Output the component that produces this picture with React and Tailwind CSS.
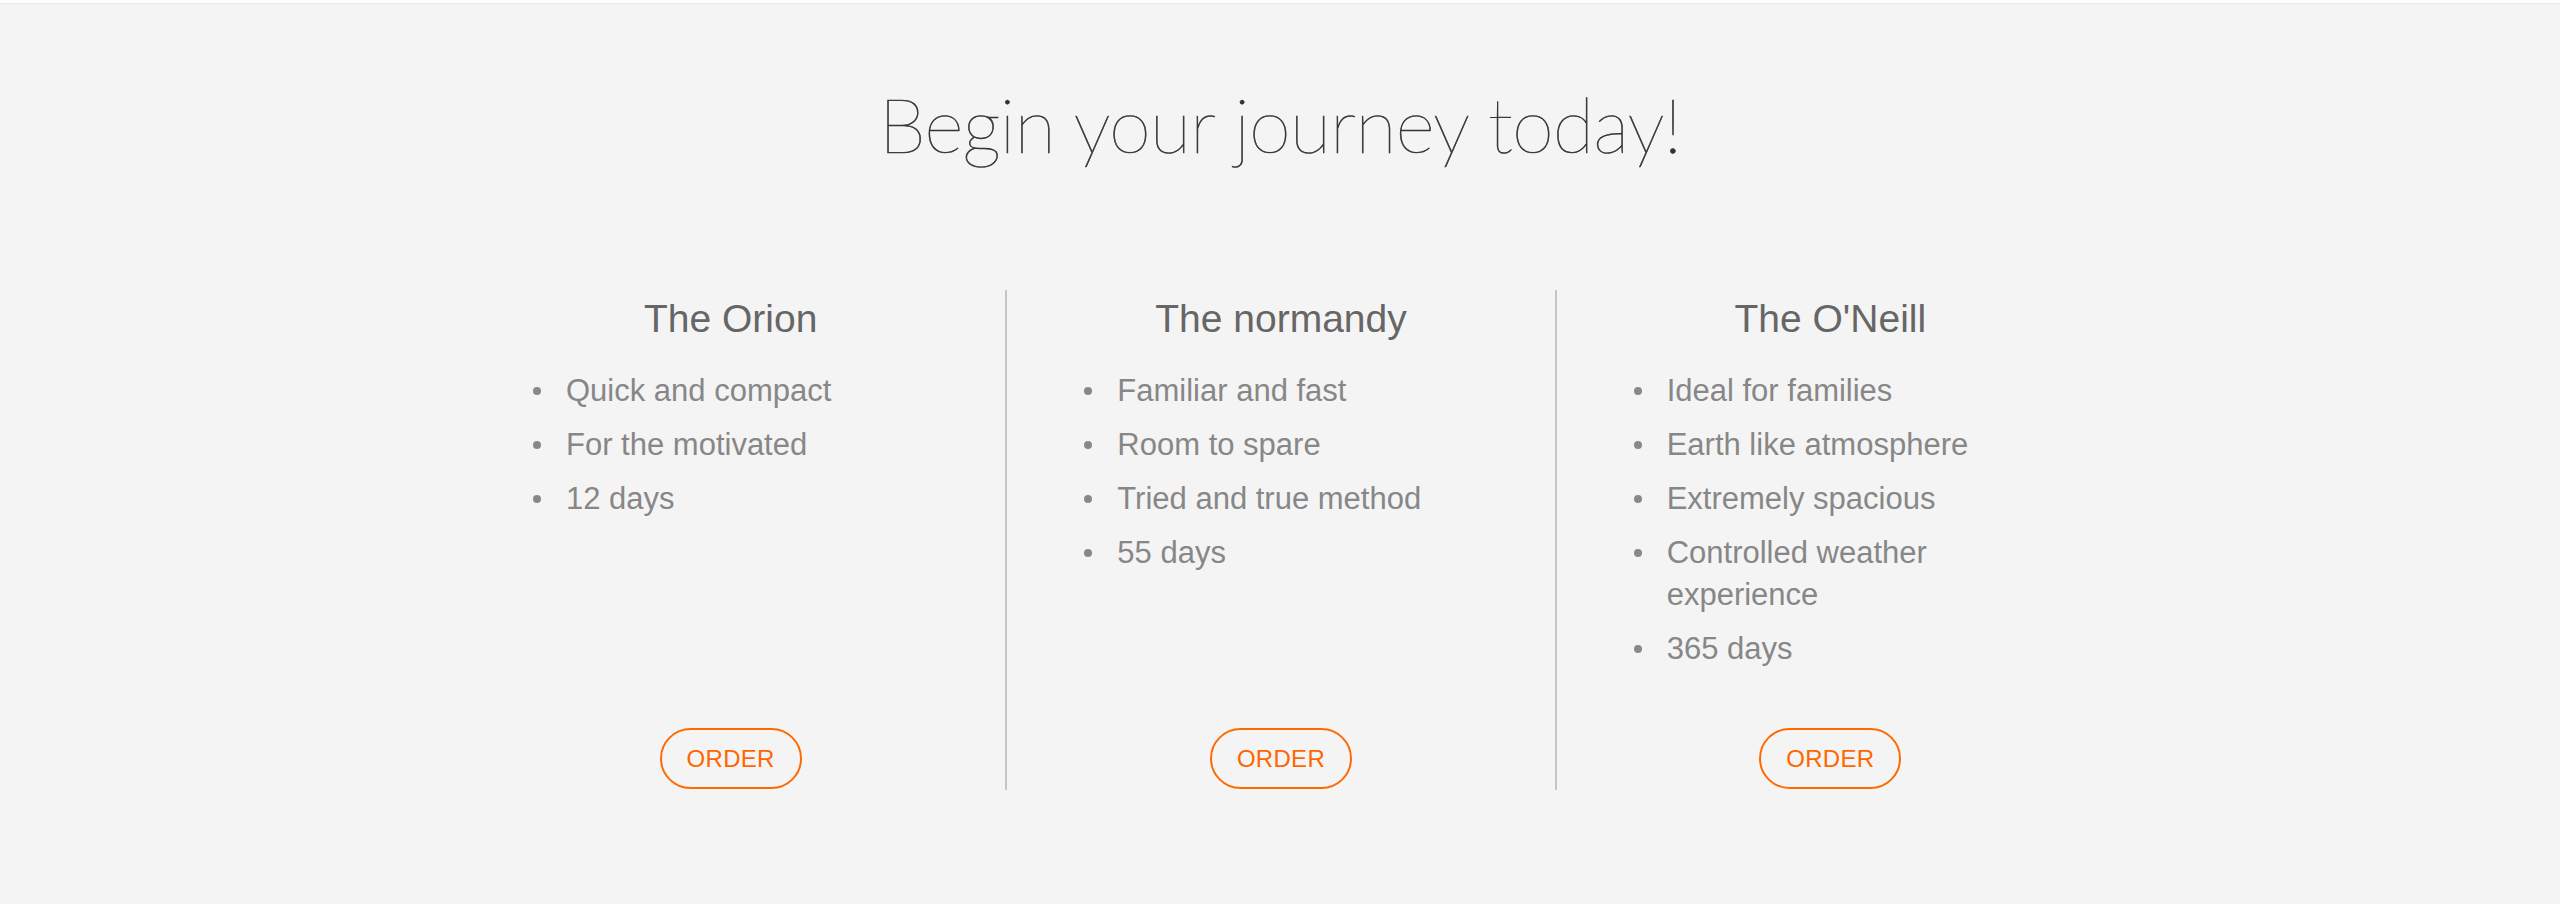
const plans = [
  {
    name: "The Orion",
    features: ["Quick and compact", "For the motivated", "12 days"],
  },
  {
    name: "The normandy",
    features: ["Familiar and fast", "Room to spare", "Tried and true method", "55 days"],
  },
  {
    name: "The O'Neill",
    features: [
      "Ideal for families",
      "Earth like atmosphere",
      "Extremely spacious",
      "Controlled weather experience",
      "365 days",
    ],
  },
];

function PlanColumn({ plan, first }) {
  return (
    <div
      className={
        "flex h-[500px] flex-col items-center pt-[6px] " +
        (first ? "" : "border-l-2 border-[#c4c4c4]")
      }
    >
      <h3 className="text-[39px] leading-[46px] text-[#666666]">{plan.name}</h3>
      <ul className="mt-[28px] ml-[77px] mr-[96px] flex flex-col gap-[12px] self-stretch">
        {plan.features.map((feature) => (
          <li key={feature} className="flex items-start text-[31px] leading-[42px] text-[#878787]">
            <span className="mt-[17px] mr-[25px] h-[8px] w-[8px] shrink-0 rounded-full bg-[#888888]" />
            <span>{feature}</span>
          </li>
        ))}
      </ul>
      <button className="mt-auto mb-[1px] flex h-[61px] w-[142px] items-center justify-center rounded-full border-2 border-[#ff6a00] text-[24px] tracking-[0.3px] text-[#ff6600]">
        ORDER
      </button>
    </div>
  );
}

export default function App() {
  return (
    <div
      className="min-h-screen bg-white pt-[3px]"
      style={{ fontFamily: '"Liberation Sans", Arial, sans-serif' }}
    >
      <main className="min-h-[901px] border-t border-[#e9e9e9] bg-[#f4f4f4] pt-[73px]">
        <h1
          className="text-center text-[76px] font-extralight leading-[94px] tracking-[-1px] text-[#333333] [-webkit-text-stroke:0.6px_#333333]"
          style={{ fontFamily: "Lato, sans-serif" }}
        >
          Begin your journey today!
        </h1>
        <section className="mx-auto mt-[119px] grid w-[1648px] grid-cols-3">
          {plans.map((plan, i) => (
            <PlanColumn key={plan.name} plan={plan} first={i === 0} />
          ))}
        </section>
      </main>
    </div>
  );
}
